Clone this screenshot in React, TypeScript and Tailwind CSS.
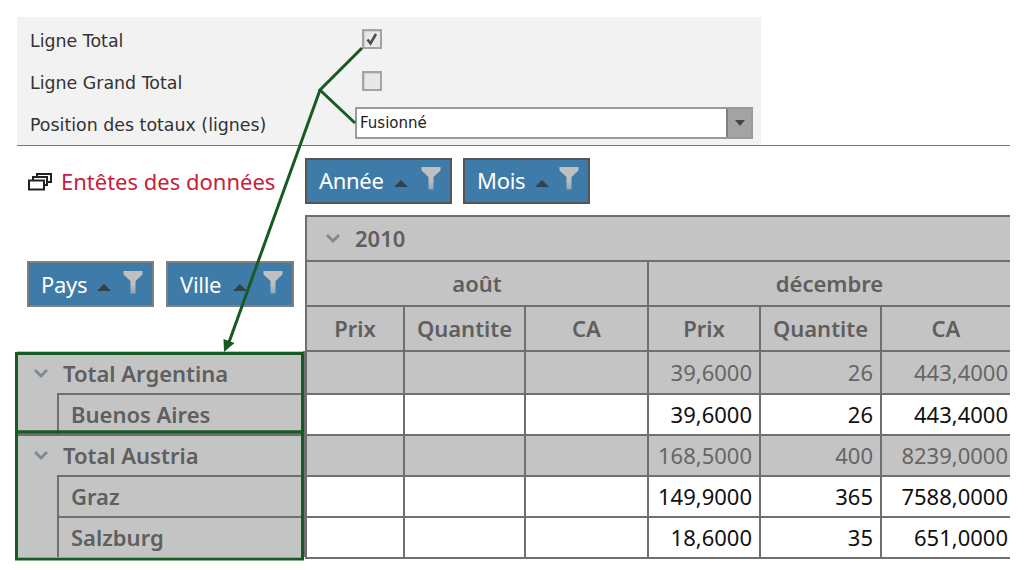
const font = "font-['Noto_Sans',sans-serif]"
const labelFont = "font-['DejaVu_Sans',sans-serif]"

function FilterIcon() {
  return (
    <svg width="20" height="24" viewBox="0 0 20 24" className="shrink-0">
      <defs>
        <linearGradient id="funnel" x1="0" y1="0" x2="0" y2="1">
          <stop offset="0.6" stopColor="#c0c0c0" />
          <stop offset="1" stopColor="#8fa6b8" />
        </linearGradient>
      </defs>
      <path d="M0.5 1h19v3.5l-7 6.5v12.5h-5v-12.5l-7-6.5z" fill="url(#funnel)" />
    </svg>
  )
}

function SortIcon() {
  return (
    <svg width="14" height="7" viewBox="0 0 14 7" className="shrink-0">
      <path d="M7 0l7 7H0z" fill="#35404a" />
    </svg>
  )
}

function Chevron() {
  return (
    <svg width="16" height="11" viewBox="0 0 16 11" className="shrink-0">
      <path d="M2 2l6 6 6-6" fill="none" stroke="#808a94" strokeWidth="3" />
    </svg>
  )
}

function Field({ label, width, gap, light }: { label: string; width: string; gap: string; light?: boolean }) {
  return (
    <div
      className={`${width} flex h-[46px] items-center border-2 bg-[#3f7ba8] pl-[12px] text-[22px] tracking-[-0.3px] text-white ${
        light ? 'border-[#808080]' : 'border-[#555555] pb-[2px]'
      }`}
    >
      <span>{label}</span>
      <span className={`${gap} mt-[7px] flex items-center`}>
        <SortIcon />
      </span>
      <span className="ml-auto mr-[9px] -mt-[4px] flex">
        <FilterIcon />
      </span>
    </div>
  )
}

function Check({ checked }: { checked?: boolean }) {
  return (
    <div className="flex h-[20px] w-[20px] items-center justify-center border-2 border-[#a4a4a4] bg-[#e8e8e8] shadow-[inset_1px_1px_1px_#cfcfcf]">
      {checked && (
        <svg width="14" height="14" viewBox="0 0 14 14">
          <path d="M2.5 7.5l3 4 5.5-9.5" fill="none" stroke="#4d4d4d" strokeWidth="2.6" />
        </svg>
      )}
    </div>
  )
}

function Head({ children, className = '' }: { children?: React.ReactNode; className?: string }) {
  return (
    <div className={`flex items-center justify-center border-b-2 border-l-2 border-[#6f6f6f] bg-[#c4c4c4] text-[22px] font-semibold text-[#5f5f5f] ${className}`}>
      {children}
    </div>
  )
}

function Num({ children, total }: { children?: React.ReactNode; total?: boolean }) {
  return (
    <div
      className={`flex items-center justify-end border-b-2 border-l-2 border-[#6f6f6f] text-[22px] ${
        total ? 'bg-[#c4c4c4] text-[#666666]' : 'bg-white text-[#111111]'
      }`}
    >
      {children}
    </div>
  )
}

function DataRow({ total, a, b, c }: { total?: boolean; a: string; b: string; c: string }) {
  return (
    <>
      <Num total={total} />
      <Num total={total} />
      <Num total={total} />
      <Num total={total}>
        <span className="pr-[7px]">{a}</span>
      </Num>
      <Num total={total}>
        <span className="pr-[7px]">{b}</span>
      </Num>
      <Num total={total}>
        <span className="pr-[2px]">{c}</span>
      </Num>
    </>
  )
}

function TotalRow({ label, className }: { label: string; className: string }) {
  return (
    <div className={`flex items-center bg-[#c4c4c4] pl-[16px] text-[22px] font-semibold text-[#5f5f5f] ${className}`}>
      <Chevron />
      <span className="ml-[14px]">{label}</span>
    </div>
  )
}

function ChildRow({ label }: { label: string }) {
  return (
    <div className="flex h-[41px] bg-[#c4c4c4] pl-[40px]">
      <div className="flex flex-1 items-center border-l-2 border-t-2 border-[#6f6f6f] pl-[12px] text-[22px] font-semibold text-[#5f5f5f]">
        {label}
      </div>
    </div>
  )
}

export default function App() {
  return (
    <div className={`${font} relative h-[570px] w-[1024px] overflow-hidden bg-white pl-[17px] pt-[17px]`}>
      <div className={`${labelFont} h-[128px] w-[744px] bg-[#f2f2f2] pl-[13px] pt-[2px] text-[17.4px] leading-none text-[#333333]`}>
        <div className="flex h-[42px] items-center">
          <span className="w-[332px] shrink-0 pt-[3px]">Ligne Total</span>
          <div className="-mt-[2px] flex">
            <Check checked />
          </div>
        </div>
        <div className="flex h-[42px] items-center">
          <span className="w-[332px] shrink-0 pt-[3px]">Ligne Grand Total</span>
          <div className="-mt-[2px] flex">
            <Check />
          </div>
        </div>
        <div className="flex h-[42px] items-center">
          <span className="w-[325px] shrink-0 pt-[3px]">Position des totaux (lignes)</span>
          <div className="-mt-[2px] flex h-[32px] w-[398px] border-2 border-[#9a9a9a] bg-white">
            <span className="flex-1 pl-[3px] text-[15px] leading-[28px] text-[#222222]">Fusionné</span>
            <div className="flex w-[25px] items-center justify-center border-l-2 border-[#808080] bg-[#a3a3a3]">
              <svg width="10" height="6" viewBox="0 0 10 6">
                <path d="M0 0h10L5 6z" fill="#444444" />
              </svg>
            </div>
          </div>
        </div>
      </div>
      <div className="h-[1px] w-[993px] bg-[#777777]" />

      <div className="grid grid-cols-[288px_705px]">
        <div>
          <div className="mt-[12px] flex h-[46px] items-center pl-[11px]">
            <svg width="24" height="19" viewBox="0 0 24 19" fill="none" stroke="#222222" strokeWidth="2">
              <rect x="1" y="8.5" width="15" height="9" />
              <path d="M5 8V5h14v8h-3" />
              <path d="M9 5V2h14v8h-4" />
            </svg>
            <span className="ml-[9px] text-[22px] text-[#c8203a]">Entêtes des données</span>
          </div>
          <div className="mt-[57px] flex gap-[12px] pl-[10px]">
            <Field label="Pays" width="w-[127px]" gap="ml-[10px]" light />
            <Field label="Ville" width="w-[128px]" gap="ml-[12px]" light />
          </div>
          <div className="mt-[44px] border-r-2 border-[#6f6f6f]">
            <TotalRow label="Total Argentina" className="h-[42px] pt-[2px]" />
            <ChildRow label="Buenos Aires" />
            <TotalRow label="Total Austria" className="h-[41px] border-t-2 border-[#6f6f6f]" />
            <ChildRow label="Graz" />
            <ChildRow label="Salzburg" />
          </div>
        </div>

        <div>
          <div className="mt-[12px] flex gap-[11px]">
            <Field label="Année" width="w-[147px]" gap="ml-[10px]" />
            <Field label="Mois" width="w-[127px]" gap="ml-[10px]" />
          </div>
          <div className="mt-[11px] grid grid-cols-[98px_121px_123px_112px_121px_130px] grid-rows-[45px_45px_45px_43px_41px_41px_41px_41px] border-t-2 border-[#6f6f6f]">
            <Head className="col-span-6 justify-start pl-[18px]">
              <Chevron />
              <span className="ml-[14px]">2010</span>
            </Head>
            <Head className="col-span-3">août</Head>
            <Head className="col-span-3">décembre</Head>
            <Head>Prix</Head>
            <Head>Quantite</Head>
            <Head>CA</Head>
            <Head>Prix</Head>
            <Head>Quantite</Head>
            <Head>CA</Head>
            <DataRow total a="39,6000" b="26" c="443,4000" />
            <DataRow a="39,6000" b="26" c="443,4000" />
            <DataRow total a="168,5000" b="400" c="8239,0000" />
            <DataRow a="149,9000" b="365" c="7588,0000" />
            <DataRow a="18,6000" b="35" c="651,0000" />
          </div>
        </div>
      </div>

      <svg className="absolute left-0 top-0" width="1024" height="570" fill="none" stroke="#165a24" strokeWidth="3">
        <path d="M362 48L320 90L355 123" />
        <path d="M320 90L228 345" />
        <path d="M224 352l-0.5-13 11 4z" fill="#165a24" stroke="none" />
        <rect x="16.5" y="353.5" width="286" height="78.5" />
        <rect x="16.5" y="432" width="286" height="127" />
      </svg>
    </div>
  )
}
